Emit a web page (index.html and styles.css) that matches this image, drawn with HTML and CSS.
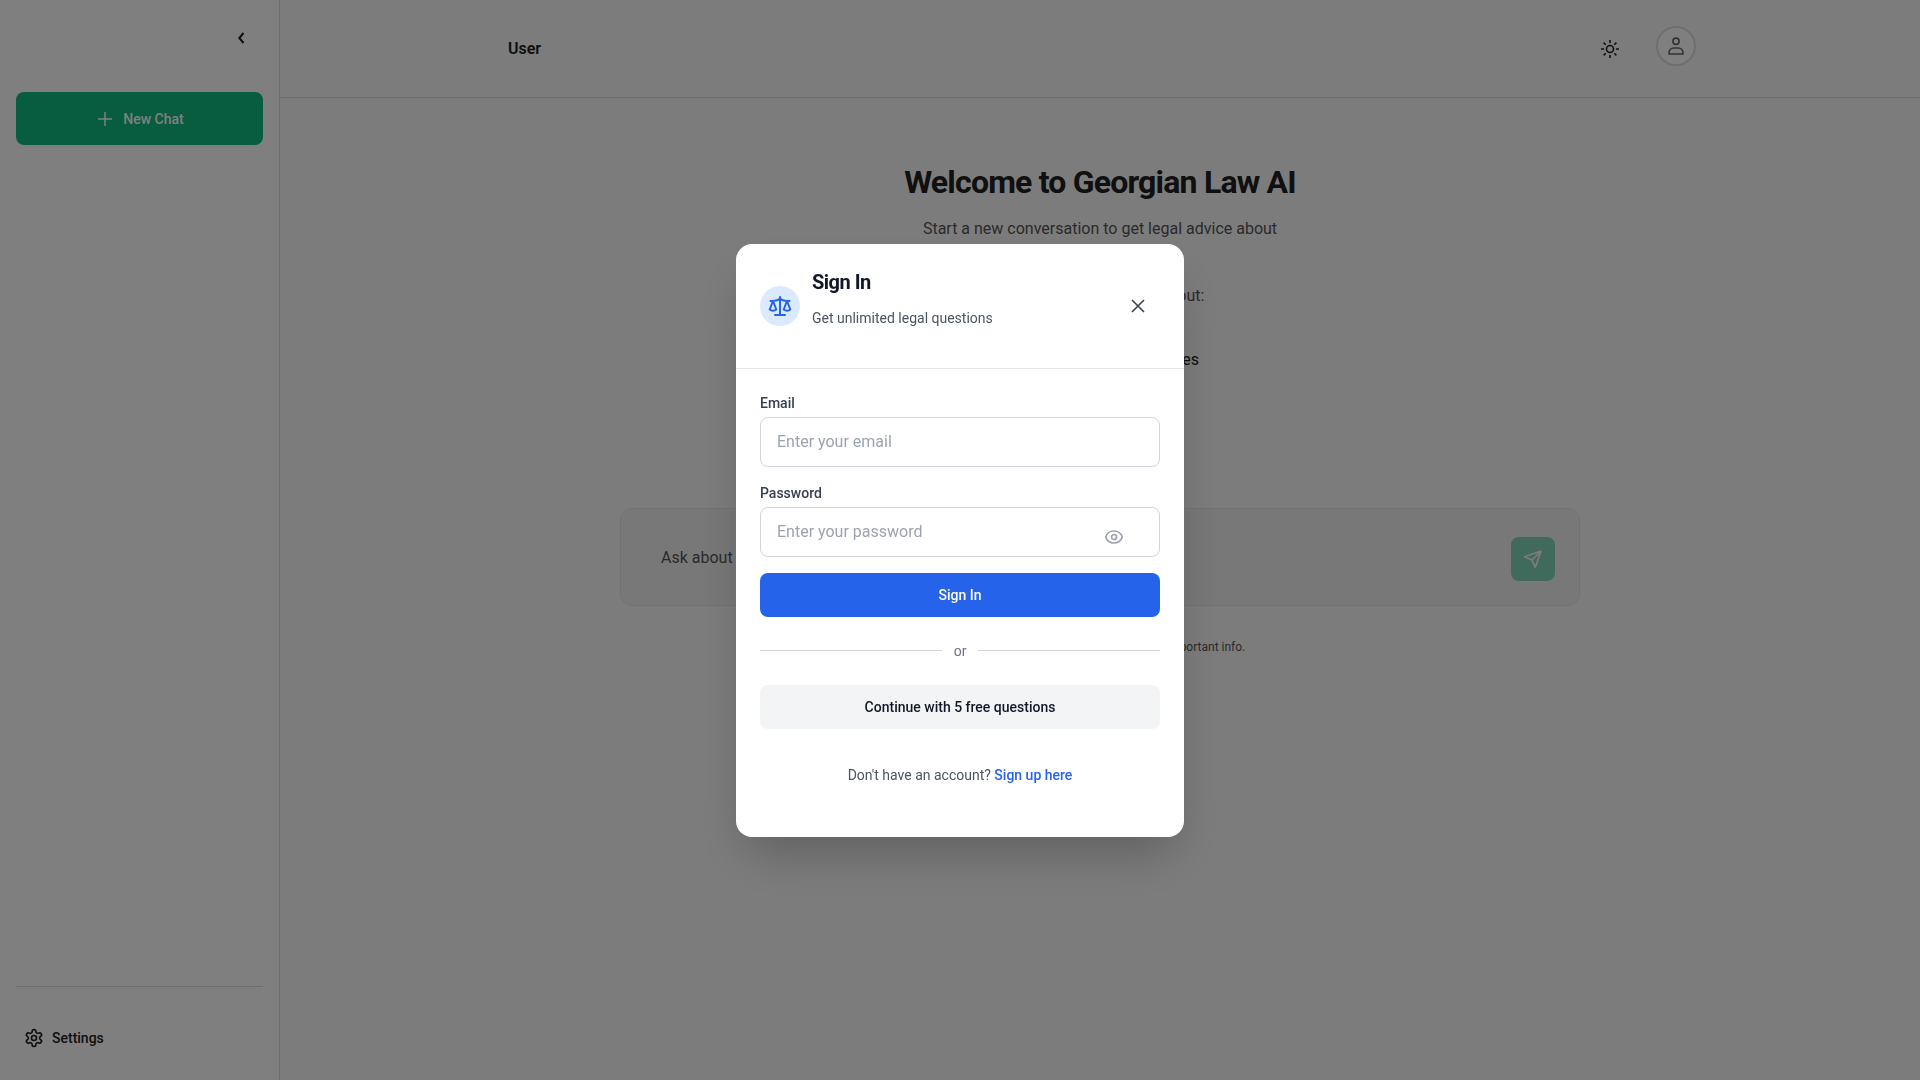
FILE: index.html
```html
<!DOCTYPE html>
<html lang="en">
<head>
    <meta charset="UTF-8">
    <meta name="viewport" content="width=device-width, initial-scale=1.0">
    <title>Georgian Law AI</title>
    <link rel="stylesheet" href="styles.css">
</head>
<body>

    <div class="app">
        <aside class="sidebar">
            <div class="sidebar-top">
                <button type="button" class="icon-btn" aria-label="Collapse sidebar">
                    <svg width="20" height="20" viewBox="0 0 20 20" fill="none" stroke="currentColor" stroke-width="2"><path d="M12.500 5 8.300 10l4.200 5"/></svg>
                </button>
            </div>
            <button type="button" class="new-chat">
                <svg width="20" height="20" viewBox="0 0 20 20" fill="none" stroke="currentColor" stroke-width="1.500"><path d="M10 3v14M3 10h14"/></svg>
                New Chat
            </button>
            <div class="sidebar-bottom">
                <button type="button" class="settings">
                    <svg width="20" height="20" viewBox="0 0 24 24" fill="none" stroke="currentColor" stroke-width="2" stroke-linejoin="round"><path d="M12.220 2h-.44a2 2 0 0 0-2 2v.18a2 2 0 0 1-1 1.730l-.43.25a2 2 0 0 1-2 0l-.15-.08a2 2 0 0 0-2.730.73l-.22.38a2 2 0 0 0 .73 2.730l.15.1a2 2 0 0 1 1 1.720v.51a2 2 0 0 1-1 1.740l-.15.09a2 2 0 0 0-.73 2.730l.22.38a2 2 0 0 0 2.730.73l.15-.08a2 2 0 0 1 2 0l.43.25a2 2 0 0 1 1 1.730V20a2 2 0 0 0 2 2h.44a2 2 0 0 0 2-2v-.18a2 2 0 0 1 1-1.730l.43-.25a2 2 0 0 1 2 0l.15.08a2 2 0 0 0 2.730-.73l.22-.39a2 2 0 0 0-.73-2.730l-.15-.08a2 2 0 0 1-1-1.740v-.5a2 2 0 0 1 1-1.740l.15-.09a2 2 0 0 0 .73-2.730l-.22-.38a2 2 0 0 0-2.730-.73l-.15.08a2 2 0 0 1-2 0l-.43-.25a2 2 0 0 1-1-1.730V4a2 2 0 0 0-2-2z"/><circle cx="12" cy="12" r="3"/></svg>
                    Settings
                </button>
            </div>
        </aside>

        <div class="main">
            <header class="header">
                <div class="header-inner">
                    <span class="user-name">User</span>
                    <button type="button" class="icon-btn theme-btn" aria-label="Toggle theme">
                        <svg width="20" height="20" viewBox="0 0 20 20" fill="none" stroke="currentColor" stroke-width="1.600"><circle cx="10" cy="10" r="3.500"/><path d="M10 1v3M10 16v3M1 10h3M16 10h3M3.600 3.600l2.100 2.100M14.300 14.300l2.100 2.100M3.600 16.400l2.100-2.100M14.300 5.700l2.100-2.100"/></svg>
                    </button>
                    <button type="button" class="avatar" aria-label="Account">
                        <svg width="20" height="20" viewBox="0 0 20 20" fill="none" stroke="currentColor" stroke-width="1.700"><circle cx="10" cy="5.200" r="3.100"/><path d="M3.100 18v-1.500c0-2.500 2-4.500 4.500-4.500h4.800c2.500 0 4.500 2 4.500 4.500v1.500z"/></svg>
                    </button>
                </div>
            </header>

            <main class="content">
                <h1>Welcome to Georgian Law AI</h1>
                <p class="lead">Start a new conversation to get legal advice about</p>
                <p class="topics-title">You can ask questions about:</p>
                <p class="topic">Legal rights and procedures</p>

                <form class="ask">
                    <input type="text" class="ask-input" placeholder="Ask about Georgian law..." aria-label="Message">
                    <button type="submit" class="send" disabled aria-label="Send">
                        <svg width="20" height="20" viewBox="0 0 20 20" fill="none" stroke="currentColor" stroke-width="1.700" stroke-linejoin="round"><path d="M18 2 1.500 7.800l7.500 3.200 3.200 7.500zM18 2l-9 9"/></svg>
                    </button>
                </form>
                <p class="note">AI can make mistakes, so please check important info.</p>
            </main>
        </div>
    </div>

    <div class="overlay">
        <div class="modal" role="dialog" aria-modal="true" aria-labelledby="modalTitle">
            <div class="modal-header">
                <div class="modal-icon">
                    <svg width="24" height="24" viewBox="0 0 24 24" fill="none" stroke="currentColor" stroke-width="2" stroke-linecap="round" stroke-linejoin="round"><path d="M12 3v18M7 21h10M2.500 7h2.500c2.500 0 5-1 7-2 2 1 4.500 2 7 2h2.500M5 7l-3.300 8.500c2 1.500 4.600 1.500 6.600 0zM19 7l-3.300 8.500c2 1.500 4.600 1.500 6.600 0z"/></svg>
                </div>
                <div class="modal-heading">
                    <h2 id="modalTitle">Sign In</h2>
                    <p>Get unlimited legal questions</p>
                </div>
                <button type="button" class="close" aria-label="Close">
                    <svg width="20" height="20" viewBox="0 0 20 20" fill="none" stroke="currentColor" stroke-width="1.600"><path d="M4 4l12 12M16 4 4 16"/></svg>
                </button>
            </div>

            <form class="modal-body">
                <div class="field">
                    <label for="email">Email</label>
                    <input type="email" id="email" placeholder="Enter your email">
                </div>
                <div class="field">
                    <label for="password">Password</label>
                    <div class="password-box">
                        <input type="password" id="password" placeholder="Enter your password">
                        <button type="button" class="eye" aria-label="Show password">
                            <svg width="20" height="20" viewBox="0 0 20 20" fill="none" stroke="currentColor" stroke-width="1.700"><path d="M1.700 10C3 6 6 4 10 4s7 2 8.300 6c-1.300 4-4.300 6-8.300 6s-7-2-8.300-6z"/><circle cx="10" cy="10" r="2.500"/></svg>
                        </button>
                    </div>
                </div>
                <button type="submit" class="btn btn-primary">Sign In</button>
                <div class="divider"><span>or</span></div>
                <button type="button" class="btn btn-light">Continue with 5 free questions</button>
                <p class="signup">Don't have an account? <a href="#">Sign up here</a></p>
            </form>
        </div>
    </div>

</body>
</html>
```
FILE: styles.css
```css
* {
    box-sizing: border-box;
}

body {
    margin: 0;
    font-family: Roboto, "Noto Sans", sans-serif;
    font-size: 16px;
    line-height: 24px;
    color: #202020;
}

h1, h2, p {
    margin: 0;
}

h1, h2 {
    font-weight: 700;
    letter-spacing: -0.025em;
}

button, input {
    font-family: inherit;
}

button {
    border: 0;
    padding: 0;
    background: none;
    color: inherit;
    cursor: pointer;
}

svg {
    display: block;
}

.app {
    display: flex;
    min-height: 100vh;
    background: #f9f9f9;
}

/* sidebar */
.sidebar {
    display: flex;
    flex-direction: column;
    width: 280px;
    padding: 16px 16px 20px;
    background: #fff;
    border-right: 1px solid #ddd;
}

.sidebar-top {
    display: flex;
    justify-content: flex-end;
    height: 76px;
}

.icon-btn {
    display: flex;
    align-items: center;
    justify-content: center;
    width: 44px;
    height: 44px;
}

.new-chat {
    display: flex;
    align-items: center;
    justify-content: center;
    gap: 8px;
    height: 53px;
    border-radius: 8px;
    background: #10b981;
    color: #fff;
    font-size: 14px;
    font-weight: 500;
}

.sidebar-bottom {
    margin-top: auto;
    padding-top: 29px;
    border-top: 1px solid #ddd;
}

.settings {
    display: flex;
    align-items: center;
    gap: 8px;
    width: 100%;
    height: 44px;
    padding: 0 8px;
    font-size: 14px;
    font-weight: 500;
}

/* header */
.main {
    flex: 1;
}

.header {
    border-bottom: 1px solid #ddd;
}

.header-inner {
    display: flex;
    align-items: center;
    max-width: 1192px;
    height: 97px;
    margin: 0 auto;
    padding-left: 4px;
}

.user-name {
    margin-right: auto;
    font-weight: 600;
}

.theme-btn {
    margin-right: 24px;
}

.avatar {
    display: flex;
    align-items: center;
    justify-content: center;
    width: 40px;
    height: 40px;
    margin-bottom: 6px;
    border: 2px solid #ddd;
    border-radius: 50%;
    background: #fff;
    color: #666;
}

/* content */
.content {
    max-width: 1008px;
    margin: 0 auto;
    padding: 64px 24px;
    text-align: center;
}

h1 {
    font-size: 32px;
    line-height: 40px;
}

.lead {
    margin-top: 15px;
    color: #555;
}

.topics-title {
    margin-top: 43px;
    color: #555;
}

.topic {
    margin-top: 40px;
}

.ask {
    display: flex;
    align-items: flex-start;
    justify-content: space-between;
    margin-top: 136px;
    padding: 28px 24px 24px 40px;
    border: 1px solid #e5e5e5;
    border-radius: 12px;
    background: #f1f1f1;
}

.ask-input {
    flex: 1;
    height: 40px;
    border: 0;
    padding: 0;
    background: none;
    font-size: 16px;
    outline: none;
}

.ask-input::placeholder {
    color: #555;
}

.send {
    display: flex;
    align-items: center;
    justify-content: center;
    width: 44px;
    height: 44px;
    border-radius: 8px;
    background: #10b981;
    color: #fff;
    opacity: 0.5;
}

.note {
    margin-top: 29px;
    font-size: 12px;
    color: #555;
}

/* sign in modal */
.overlay {
    position: fixed;
    inset: 0;
    display: flex;
    align-items: center;
    justify-content: center;
    background: rgba(0, 0, 0, 0.5);
}

.modal {
    width: 100%;
    max-width: 448px;
    border-radius: 16px;
    background: #fff;
    box-shadow: 0 25px 50px -12px rgba(0, 0, 0, 0.25);
}

.modal-header {
    display: flex;
    align-items: center;
    gap: 12px;
    padding: 24px;
    border-bottom: 1px solid #e5e7eb;
}

.modal-icon {
    display: flex;
    align-items: center;
    justify-content: center;
    width: 40px;
    height: 40px;
    border-radius: 50%;
    background: #dbeafe;
    color: #2563eb;
}

.modal-heading {
    flex: 1;
}

.modal-heading h2 {
    font-size: 20px;
    line-height: 28px;
    color: #111827;
}

.modal-heading p {
    margin: 12px 0 16px;
    font-size: 14px;
    line-height: 20px;
    color: #4b5563;
}

.close {
    display: flex;
    align-items: center;
    justify-content: center;
    width: 44px;
    height: 44px;
    color: #374151;
}

.modal-body {
    display: flex;
    flex-direction: column;
    padding: 24px;
}

.field {
    margin-bottom: 16px;
}

.field label {
    display: block;
    margin-bottom: 4px;
    font-size: 14px;
    line-height: 20px;
    font-weight: 500;
    color: #374151;
}

.field input {
    display: block;
    width: 100%;
    height: 50px;
    padding: 0 16px;
    border: 1px solid #d1d5db;
    border-radius: 8px;
    background: #fff;
    font-size: 16px;
}

.field input::placeholder {
    color: #9ca3af;
}

.password-box {
    position: relative;
}

.eye {
    position: absolute;
    top: 8px;
    right: 24px;
    display: flex;
    align-items: center;
    justify-content: center;
    width: 44px;
    height: 44px;
    color: #9ca3af;
}

.btn {
    height: 44px;
    border-radius: 8px;
    font-size: 14px;
    font-weight: 500;
}

.btn-primary {
    background: #2563eb;
    color: #fff;
}

.btn-light {
    background: #f3f4f6;
    color: #111827;
}

.divider {
    display: flex;
    align-items: center;
    gap: 12px;
    margin: 24px 0;
    font-size: 14px;
    line-height: 20px;
    color: #6b7280;
}

.divider::before,
.divider::after {
    content: "";
    flex: 1;
    height: 1px;
    background: #d1d5db;
}

.signup {
    padding: 36px 0 28px;
    font-size: 14px;
    line-height: 20px;
    text-align: center;
    color: #4b5563;
}

.signup a {
    color: #2563eb;
    font-weight: 500;
    text-decoration: none;
}
```
